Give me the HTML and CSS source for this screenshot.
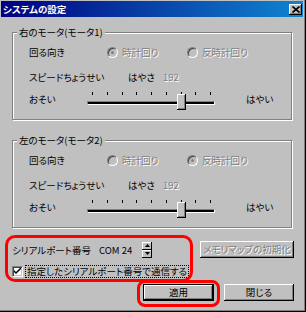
FILE: index.html
```html
<!DOCTYPE html>
<html lang="ja">
<head>
<meta charset="utf-8">
<link rel="stylesheet" href="styles.css">
</head>
<body>
<div class="window">
  <div class="titlebar">
    <span class="title">システムの設定</span>
    <span class="close"><svg width="8" height="7" viewBox="0 0 8 7"><path d="M0.5 0.5 L7.5 6.5 M7.5 0.5 L0.5 6.5" stroke="#000" stroke-width="1.6"/></svg></span>
  </div>
  <div class="main">
    <div class="group">
      <div class="legend">右のモータ(モータ1)</div>
      <div class="row r1">
        <span class="w78">回る向き</span>
        <span class="radio-item w80"><span class="radio on"></span><span class="rlabel dis">時計回り</span></span>
        <span class="radio-item"><span class="radio"></span><span class="rlabel dis">反時計回り</span></span>
      </div>
      <div class="row r2">
        <span class="w99">スピードちょうせい</span>
        <span class="w35">はやさ</span>
        <span class="dis">192</span>
      </div>
      <div class="row r3">
        <span class="w58">おそい</span>
        <div class="slider">
          <div class="ticks"><i></i><i></i><i></i><i></i><i></i><i></i><i></i><i></i><i></i></div>
          <div class="track"></div>
          <div class="thumb"></div>
        </div>
        <span class="fast">はやい</span>
      </div>
    </div>
    <div class="group">
      <div class="legend">左のモータ(モータ2)</div>
      <div class="row r1">
        <span class="w78">回る向き</span>
        <span class="radio-item w80"><span class="radio"></span><span class="rlabel dis">時計回り</span></span>
        <span class="radio-item"><span class="radio on"></span><span class="rlabel dis">反時計回り</span></span>
      </div>
      <div class="row r2">
        <span class="w99">スピードちょうせい</span>
        <span class="w35">はやさ</span>
        <span class="dis">192</span>
      </div>
      <div class="row r3">
        <span class="w58">おそい</span>
        <div class="slider">
          <div class="ticks"><i></i><i></i><i></i><i></i><i></i><i></i><i></i><i></i><i></i></div>
          <div class="track"></div>
          <div class="thumb"></div>
        </div>
        <span class="fast">はやい</span>
      </div>
    </div>
    <div class="serial">
      <span class="serial-label">シリアルポート番号</span>
      <span class="com">COM 24</span>
      <span class="spin">
        <span class="spin-btn"><svg width="5" height="3" viewBox="0 0 5 3"><path d="M2.5 0 L5 3 L0 3 Z" fill="#000"/></svg></span>
        <span class="spin-btn"><svg width="5" height="3" viewBox="0 0 5 3"><path d="M0 0 L5 0 L2.5 3 Z" fill="#000"/></svg></span>
      </span>
      <span class="btn btn-mem"><span class="dis">メモリマップの初期化</span></span>
    </div>
    <div class="check-row">
      <span class="checkbox"><svg width="7" height="7" viewBox="0 0 7 7"><path d="M0 2 L0 4 L2 6 L7 1 L7 -1 L2 4 Z" fill="#000"/></svg></span>
      <span class="check-label">指定したシリアルポート番号で通信する</span>
    </div>
    <div class="buttons">
      <span class="btn default">適用</span>
      <span class="btn">閉じる</span>
    </div>
  </div>
  <div class="mark mark1"></div>
  <div class="mark mark2"></div>
</div>
</body>
</html>
```

FILE: styles.css
```css
body {
  margin: 0;
  font-family: "Noto Sans CJK JP", "Noto Sans", sans-serif;
  font-size: 9.5px;
  font-feature-settings: "palt";
  color: #000;
}
.window {
  position: relative;
  width: 306px;
  height: 312px;
  box-sizing: border-box;
  background: #c0c0c0;
  padding: 1px 3px 3px 1px;
  box-shadow: inset -1px -1px 0 #000, inset -2px -2px 0 #808080;
}
.titlebar {
  height: 16px;
  background: linear-gradient(to right, #000080, #1084d0);
  display: flex;
  align-items: center;
  justify-content: space-between;
  padding: 0 1px 0 2px;
}
.title {
  color: #fff;
  font-weight: bold;
  line-height: 16px;
}
.close {
  width: 13px;
  height: 11px;
  box-sizing: border-box;
  background: #c0c0c0;
  box-shadow: inset -1px -1px 0 #000, inset 1px 1px 0 #fff, inset -2px -2px 0 #808080;
  display: flex;
  align-items: center;
  justify-content: center;
}
.main {
  padding: 15px 11px 0 11px;
}
.group {
  height: 88px;
  box-sizing: border-box;
  border: 1px solid #808080;
  box-shadow: 1px 1px 0 #fff, inset 1px 1px 0 #fff;
  padding-left: 4px;
  display: flex;
  flex-direction: column;
  align-items: flex-start;
}
.group + .group {
  margin-top: 20px;
}
.legend {
  margin-top: -7px;
  line-height: 13px;
  padding: 0 2px;
  background: #c0c0c0;
}
.row {
  display: flex;
  align-items: center;
  height: 14px;
  line-height: 14px;
  margin-left: 12px;
}
.r1 { margin-top: 6px; }
.r2 { margin-top: 11px; }
.r3 { margin-top: 8px; height: 18px; align-items: flex-start; }
.w78 { width: 78px; }
.w80 { width: 80px; }
.w99 { width: 99px; }
.w35 { width: 35px; }
.w58 { width: 58px; }
.radio-item {
  display: flex;
  align-items: center;
}
.radio {
  width: 11px;
  height: 11px;
  box-sizing: border-box;
  border-radius: 50%;
  border: 1px solid;
  border-color: #808080 #fff #fff #808080;
  box-shadow: inset 1px 1px 0 #404040;
  background: #c0c0c0;
  display: flex;
  align-items: center;
  justify-content: center;
}
.radio.on::after {
  content: "";
  width: 3px;
  height: 3px;
  border-radius: 50%;
  background: #808080;
}
.rlabel { margin-left: 4px; }
.dis {
  color: #808080;
  text-shadow: 1px 1px 0 #fff;
}
.slider {
  position: relative;
  width: 128px;
  height: 18px;
}
.ticks {
  display: flex;
  justify-content: space-between;
  padding: 0 4px 0 5px;
  height: 3px;
}
.ticks i {
  width: 1px;
  height: 3px;
  background: #000;
}
.track {
  margin-top: 6px;
  height: 4px;
  box-sizing: border-box;
  border: 1px solid;
  border-color: #808080 #fff #fff #808080;
  background: #000;
}
.thumb {
  position: absolute;
  left: 90px;
  top: 2px;
  width: 9px;
  height: 16px;
  box-sizing: border-box;
  background: #c0c0c0;
  box-shadow: inset -1px -1px 0 #000, inset 1px 1px 0 #fff, inset -2px -2px 0 #808080;
}
.fast { margin-left: 31px; }
.serial {
  display: flex;
  align-items: center;
  height: 17px;
  margin-top: 13px;
  margin-right: -2px;
}
.serial-label { width: 87px; }
.com { width: 43px; }
.spin {
  width: 10px;
  height: 16px;
  display: flex;
  flex-direction: column;
}
.spin-btn {
  height: 8px;
  box-sizing: border-box;
  background: #c0c0c0;
  box-shadow: inset -1px -1px 0 #000, inset 1px 1px 0 #fff;
  display: flex;
  align-items: center;
  justify-content: center;
}
.btn {
  width: 70px;
  height: 17px;
  box-sizing: border-box;
  background: #c0c0c0;
  box-shadow: inset -1px -1px 0 #000, inset 1px 1px 0 #fff, inset -2px -2px 0 #808080;
  display: flex;
  align-items: center;
  justify-content: center;
  line-height: 13px;
}
.btn-mem {
  width: 94px;
  margin-left: auto;
}
.btn.default {
  width: 71px;
  border: 1px solid #000;
}
.check-row {
  display: flex;
  align-items: center;
  height: 13px;
  margin-top: 7px;
}
.checkbox {
  width: 11px;
  height: 11px;
  box-sizing: border-box;
  background: #fff;
  border: 1px solid;
  border-color: #808080 #fff #fff #808080;
  box-shadow: inset 1px 1px 0 #404040, inset -1px -1px 0 #c0c0c0;
  display: flex;
  align-items: center;
  justify-content: center;
}
.check-label {
  margin-left: 2px;
  border: 1px dotted #000;
  padding: 0 1px;
  line-height: 11px;
}
.buttons {
  display: flex;
  justify-content: flex-end;
  gap: 10px;
  margin-top: 6px;
  margin-right: -2px;
}
.mark {
  position: absolute;
  box-sizing: border-box;
  border: 3px solid #f00;
  border-radius: 10px;
}
.mark1 {
  left: 5px;
  top: 235px;
  width: 188px;
  height: 47px;
}
.mark2 {
  left: 137px;
  top: 280px;
  width: 83px;
  height: 27px;
  border-radius: 8px;
}
```
